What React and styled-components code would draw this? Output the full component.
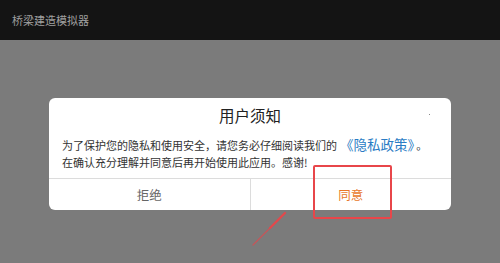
import React from "react";
import styled, { createGlobalStyle } from "styled-components";

const Global = createGlobalStyle`
  html, body { margin: 0; padding: 0; }
  body {
    width: 500px; height: 263px; overflow: hidden;
    background: #7b7b7b;
    font-family: "Noto Sans CJK SC", "Noto Sans", sans-serif;
  }
`;

const Screen = styled.div`
  position: relative;
  width: 500px;
  height: 263px;
  display: flex;
  flex-direction: column;
`;

const TopBar = styled.div`
  height: 40px;
  background: #141414;
  display: flex;
  align-items: center;
  padding-left: 12px;
  color: #a0a0a0;
  font-size: 11px;
  flex-shrink: 0;
`;

const Stage = styled.div`
  flex: 1;
  display: flex;
  justify-content: center;
  padding-top: 58px;
`;

const Dialog = styled.div`
  position: relative;
  width: 402px;
  height: 112px;
  background: #fff;
  border-radius: 6px;
  display: flex;
  flex-direction: column;
  overflow: hidden;
`;

const Title = styled.div`
  padding-top: 7px;
  line-height: 20px;
  font-size: 15.5px;
  color: #222;
  text-align: center;
`;

const Body = styled.div`
  padding: 10px 0 0 13px;
  font-size: 11px;
  line-height: 18px;
  color: #333;
  flex: 1;
`;

const Line = styled.div`
  white-space: nowrap;
  height: 18px;
`;

const Link = styled.span`
  color: #2a7cc4;
  font-size: 13.5px;
  margin-left: 3px;
  margin-right: 2px;
`;

const Dot = styled.span`
  position: absolute;
  left: 380px;
  top: 16px;
  width: 1px;
  height: 1px;
  background: #888;
`;

const Buttons = styled.div`
  display: flex;
  height: 31px;
  border-top: 1px solid #dcdcdc;
`;

const Btn = styled.div`
  flex: 1;
  display: flex;
  align-items: center;
  justify-content: center;
  font-size: 12.5px;
  color: ${(p) => (p.$primary ? "#e8782a" : "#666")};
  & + & { border-left: 1px solid #dcdcdc; }
`;

const RedBox = styled.div`
  position: absolute;
  left: 313px;
  top: 165px;
  width: 75px;
  height: 50px;
  border: 2px solid #e8464a;
  border-radius: 2px;
`;

const Arrow = styled.svg`
  position: absolute;
  left: 248px;
  top: 208px;
`;

export default function App() {
  return (
    <>
      <Global />
      <Screen>
        <TopBar>桥梁建造模拟器</TopBar>
        <Stage>
          <Dialog>
            <Title>用户须知</Title>
            <Dot />
            <Body>
              <Line>
                为了保护您的隐私和使用安全，请您务必仔细阅读我们的<Link>《隐私政策》</Link>。
              </Line>
              <Line>在确认充分理解并同意后再开始使用此应用。感谢!</Line>
            </Body>
            <Buttons>
              <Btn>拒绝</Btn>
              <Btn $primary>同意</Btn>
            </Buttons>
          </Dialog>
        </Stage>
        <RedBox />
        <Arrow width="44" height="44" viewBox="0 0 44 44">
          <path d="M5 37 L37 5" stroke="#e8464a" strokeWidth="1.2" strokeLinecap="round" opacity="0.7" />
          <path d="M22 20 L37 5" stroke="#e8464a" strokeWidth="2.4" strokeLinecap="round" opacity="0.85" />
        </Arrow>
      </Screen>
    </>
  );
}
